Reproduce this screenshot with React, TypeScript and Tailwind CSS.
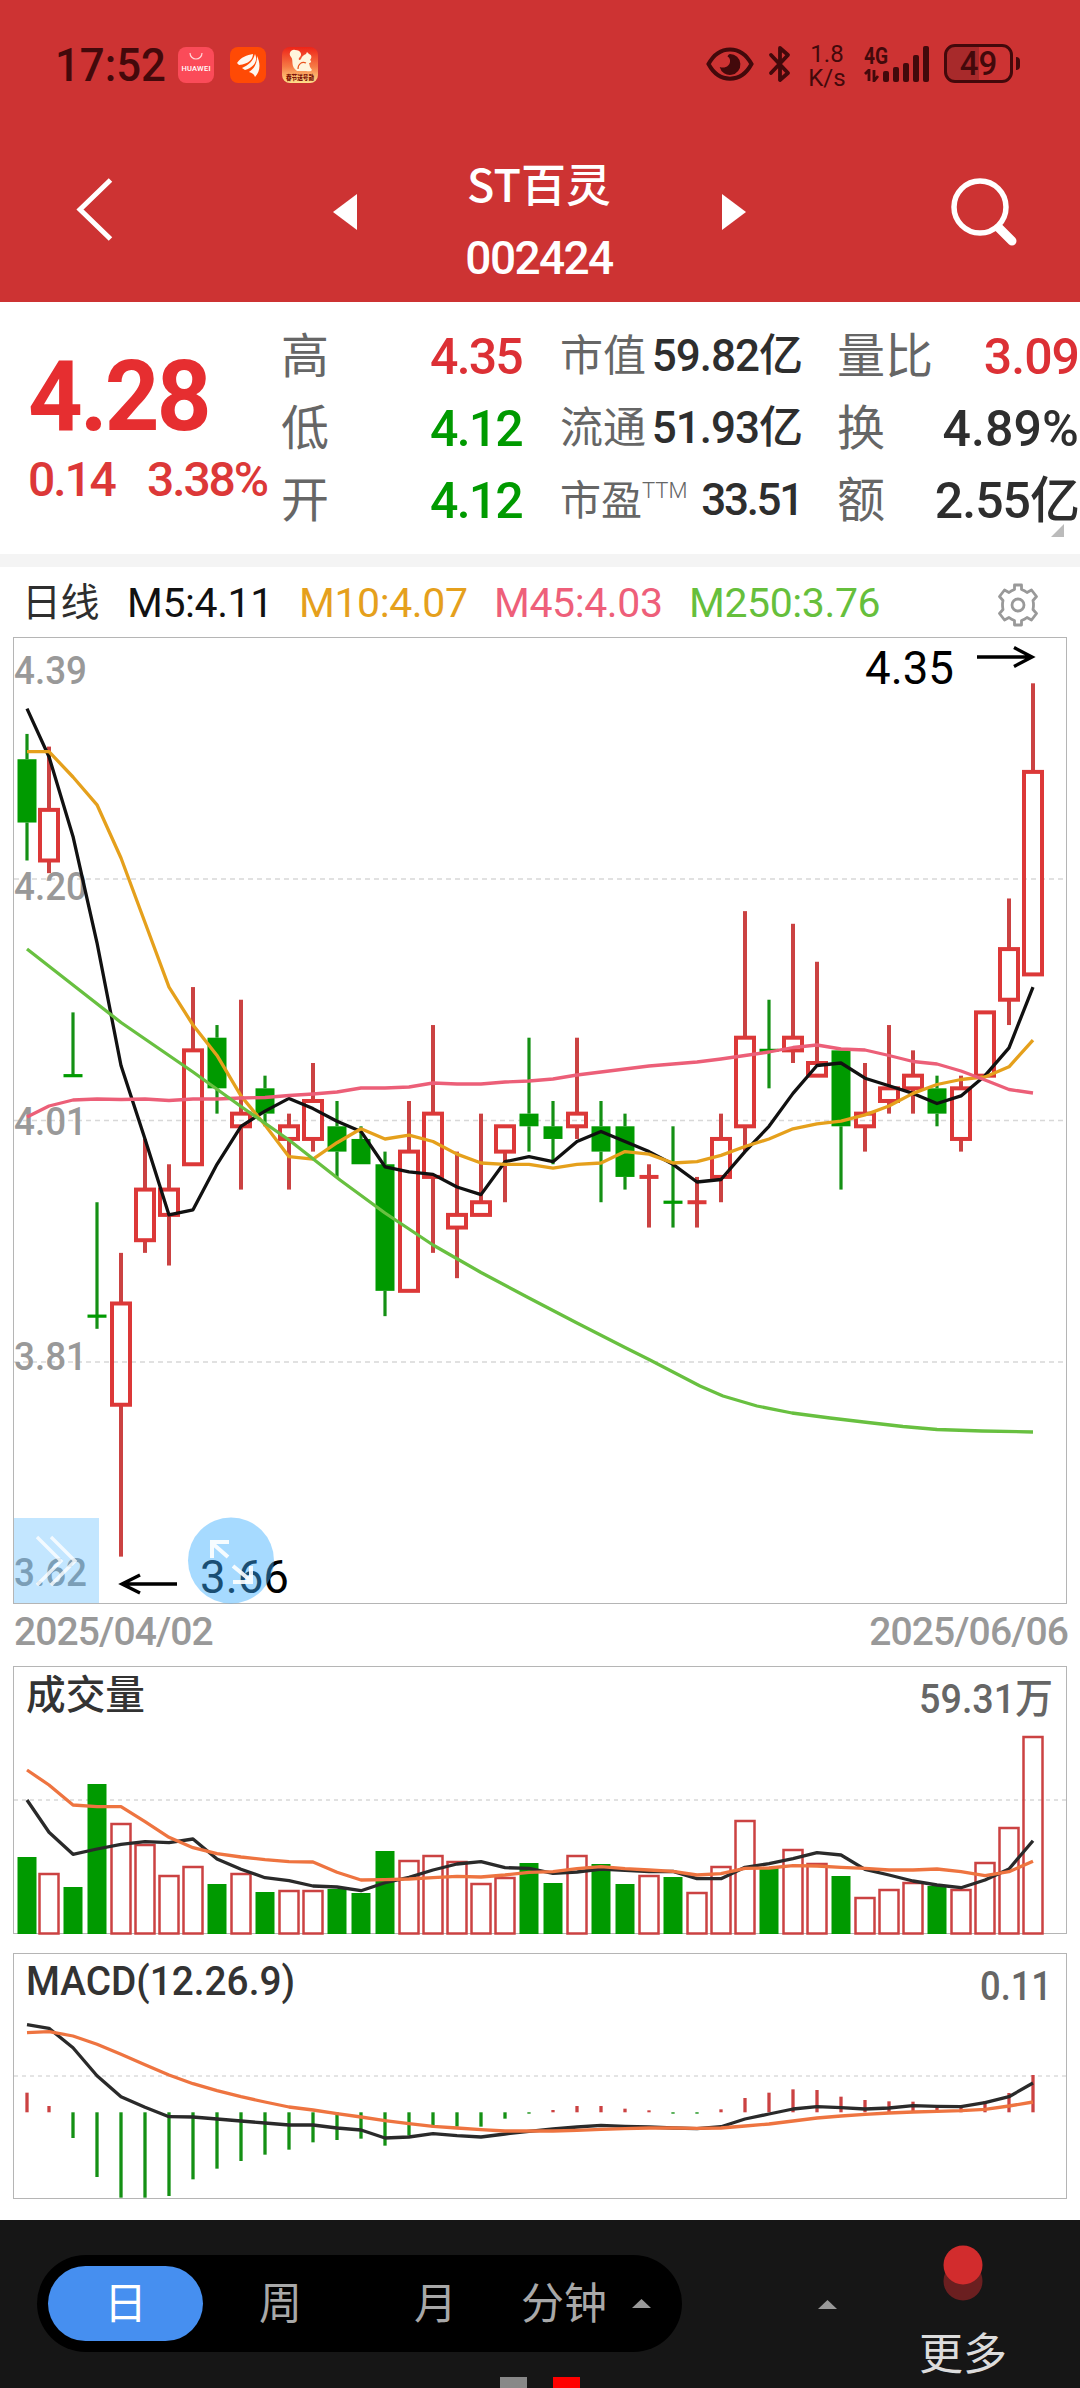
import React from "react";

type Candle = [up: boolean, high: number, top: number, bottom: number, low: number];

// Daily candles in cents, oldest first.
const candles: Candle[] = [
  [false, 431, 429, 424, 421], [true, 430, 425, 421, 420], [false, 409, 404, 404, 404], [false, 394, 385, 385, 384],
  [true, 390, 386, 378, 366], [true, 399, 395, 391, 390], [true, 397, 395, 393, 389], [true, 411, 406, 397, 397],
  [false, 408, 407, 403, 401], [true, 410, 401, 400, 395], [false, 404, 403, 401, 400], [true, 401, 400, 399, 395],
  [true, 405, 402, 399, 398], [false, 402, 400, 398, 396], [false, 400, 399, 397, 397], [false, 398, 397, 387, 385],
  [true, 402, 398, 387, 387], [true, 408, 401, 396, 390], [true, 398, 393, 392, 388], [true, 401, 394, 393, 393],
  [true, 400, 400, 398, 394], [false, 407, 401, 400, 398], [false, 402, 400, 399, 397], [true, 407, 401, 400, 399],
  [false, 402, 400, 398, 394], [false, 401, 400, 396, 395], [true, 397, 396, 396, 392], [false, 400, 394, 394, 392],
  [true, 396, 394, 394, 392], [true, 401, 399, 396, 394], [true, 417, 407, 400, 398], [false, 410, 406, 406, 403],
  [true, 416, 407, 406, 405], [true, 413, 405, 404, 404], [false, 406, 406, 400, 395], [true, 405, 401, 400, 398],
  [true, 408, 403, 402, 401], [true, 406, 404, 403, 401], [false, 404, 403, 401, 400], [true, 404, 403, 399, 398],
  [true, 409, 409, 404, 404], [true, 418, 414, 410, 408], [true, 435, 428, 412, 412],
];

const RED = "#dc3838";
const GREEN = "#009a00";
const DIN = "Roboto, 'Noto Sans CJK SC', sans-serif";

const cx = (i: number) => (i === 0 ? 27 : 25 + 24 * i);
const py = (cents: number) => 683.3 + (435 - cents) * 12.657;
const line = (ys: number[]) => ys.map((y, i) => `${cx(i)},${y.toFixed(1)}`).join(" ");

const closes = candles.map(([up, , top, bottom]) => (up ? top : bottom));
const average = (n: number, head: number[]) =>
  closes.map((_, i) => (i < head.length ? head[i] : closes.slice(i - n + 1, i + 1).reduce((a, b) => a + b, 0) / n));

const ma5 = average(5, [433, 429.2, 422.9, 414.5]).map(py);
const ma10 = average(10, [429.6, 429.6, 427.6, 425.4, 421.2, 416.1, 411, 408, 405.6]).map(py);
const ma45 = [
  1117, 1106, 1100, 1099, 1099.5, 1099, 1100.5, 1099, 1099, 1098, 1097.5, 1095.5, 1094, 1092, 1088, 1088, 1087, 1083,
  1084, 1084, 1082, 1081, 1079, 1075, 1072, 1069, 1066, 1064, 1062, 1059, 1055.5, 1052, 1047.5, 1045, 1049, 1050,
  1055.5, 1061.5, 1064, 1071, 1080, 1089.5, 1093,
];
const ma250 =
  "27,949 73,985 121,1022.5 193,1072 241,1106.5 289,1140 340,1180 385,1213 433,1245 481,1272.5 529,1298 577,1323 625,1347.5 650,1360 675,1373 700,1386 723,1396 757,1406 792,1413 830,1418 868,1422.5 903,1426.5 937,1429.5 982,1431 1033,1432";

const volumeTops = [
  1857, 1874, 1887, 1784, 1824, 1845, 1876, 1867, 1884, 1874, 1892, 1891, 1891, 1889, 1893, 1851, 1861, 1856, 1862,
  1884, 1878, 1863, 1883, 1856, 1864, 1884, 1876, 1877, 1893, 1867, 1821, 1868, 1850, 1864, 1876, 1898, 1890, 1883,
  1886, 1890, 1863, 1828, 1737,
];
const third = (base: number) => (v: number) => base + v / 3;
const volFast = [
  480, 577, 643, 627, 613, 605, 608, 597, 657, 688, 713, 722, 738, 741, 752, 728, 712, 690, 672, 665, 683, 685, 700,
  696, 687, 691, 695, 694, 716, 716, 682, 671, 656, 638, 645, 688, 705, 723, 735, 743, 720, 687, 602,
].map(third(1640));
const volSlow = [
  390, 435, 495, 500, 500, 545, 592, 623, 641, 651, 659, 665, 666, 697, 720, 719, 717, 713, 709, 711, 705, 697, 695,
  686, 680, 686, 690, 694, 705, 701, 685, 684, 677, 678, 682, 685, 690, 690, 687, 695, 707, 695, 664,
].map(third(1640));

const macdBars = [
  458, 498, 594, 711, 773, 773, 768, 718, 686, 663, 644, 629, 607, 600, 596, 617, 587, 562, 560, 560, 536, 521, 510,
  498, 498, 506, 511, 521, 521, 508, 474, 458, 448, 450, 470, 480, 484, 485, 502, 503, 483, 459, 405,
].map(third(1940));
const dif = [
  254, 265, 323, 407, 470, 502, 530, 531, 537, 543, 549, 555, 555, 564, 570, 594, 591, 581, 587, 591, 582, 574, 567,
  561, 556, 559, 561, 564, 566, 560, 537, 522, 507, 500, 503, 507, 504, 497, 499, 500, 488, 470, 429,
].map(third(1940));
const dea = [
  278, 275, 288, 313, 343, 374, 405, 431, 452, 470, 486, 501, 510, 521, 531, 542, 551, 559, 564, 569, 573, 573, 573,
  571, 568, 566, 564, 564, 565, 564, 558, 552, 543, 534, 528, 523, 519, 516, 514, 512, 508, 498, 486,
].map(third(1940));

type LabelProps = { x: number; y: number; w: number; size: number; fill: string; weight?: number; children: string };

function Label({ x, y, w, size, fill, weight = 500, children }: LabelProps) {
  return (
    <text x={x} y={y} textLength={w} lengthAdjust="spacingAndGlyphs" fontSize={size} fill={fill} fontWeight={weight} fontFamily={DIN}>
      {children}
    </text>
  );
}

function StatusBar() {
  return (
    <div className="flex h-[130px] items-start pl-[55px] pr-[60px] pt-[44px] text-[#43090b]">
      <span className="w-[123px] origin-left scale-x-[0.95] whitespace-nowrap text-[46px] font-medium leading-[43px]">17:52</span>
      <div className="mt-[3px] flex gap-4">
        <svg width="36" height="36" viewBox="0 0 36 36">
          <rect width="36" height="36" rx="8" fill="#fb4b59" />
          <path d="M12 6a6 6 0 0 0 12 0" fill="none" stroke="#ffd5d8" strokeWidth="1.2" />
          <text x="3.5" y="23.5" fontSize="7.5" fontWeight="500" fill="#fff" textLength="29" fontFamily={DIN}>HUAWEI</text>
        </svg>
        <svg width="36" height="36" viewBox="0 0 36 36">
          <rect width="36" height="36" rx="8" fill="#ff4a05" />
          <path d="M7 16C11 10 17 8 23 7c0 5-4 10-14 11zM12 21C19 18 23 14 25 7c3 6 0 13-10 16zM19 25c6-4 8-9 8-16 4 8 3 16-2 21-1-3-3-4-6-5z" fill="#fff6ee" />
        </svg>
        <svg width="36" height="36" viewBox="0 0 36 36">
          <defs>
            <linearGradient id="promo" x1="0" y1="0" x2="0" y2="1">
              <stop offset="0" stopColor="#ee2418" />
              <stop offset="0.55" stopColor="#f67a45" />
              <stop offset="1" stopColor="#ffe08a" />
            </linearGradient>
          </defs>
          <rect width="36" height="36" rx="8" fill="url(#promo)" />
          <path d="M15 24C8 19 12 13 9 10 6 7 9 2 13 3c6 0 8 5 4 8-1 2 1 3 2 1 1-3 3-4 5-5l1-2 2 2c3 1 3 4 1 6 2 1 1 3-1 3l1 4 2 3c-1 2-4 1-6 1z" fill="#fff5dd" />
          <path d="M16 22c0-5 4-8 8-6" fill="none" stroke="#e8541e" strokeWidth="1.2" />
          <text x="4" y="32.5" fontSize="6.5" fontWeight="900" fill="#7d1508" textLength="28" lengthAdjust="spacingAndGlyphs" fontFamily={DIN}>春节送号勋</text>
        </svg>
      </div>
      <div className="ml-auto flex items-start">
        <svg width="48" height="34" viewBox="0 0 48 34" className="mt-[3px]">
          <path d="M2.5 17C13-2.5 35-2.5 45.500 17 35 36.500 13 36.500 2.500 17z" fill="none" stroke="currentColor" strokeWidth="4" />
          <path d="M24 7a10.500 10.500 0 1 1-10.300 13c5 2 11-1 10.300-7-.2-2-1.500-3-2.500-3.500C22 8 23 7.200 24 7z" fill="currentColor" />
        </svg>
        <svg width="26" height="38" viewBox="0 0 26 38" className="ml-[13px] mt-[1px]">
          <path d="M4 10l17 18-8 7V3l8 7L4 28" fill="none" stroke="currentColor" strokeWidth="3.8" strokeLinejoin="round" strokeLinecap="round" />
        </svg>
        <div className="ml-[14px] mt-[-2px] w-[40px] text-center text-[24px] leading-[24px]">
          <div>1.8</div>
          <div>K/s</div>
        </div>
        <div className="ml-[17px] w-[27px]">
          <div className="origin-left scale-x-[0.8] text-[24px] font-bold leading-[24px]">4G</div>
          <svg width="16" height="13" viewBox="0 0 16 13" className="mt-px">
            <path d="M1 5l4-4v11M10 1v11l4-5" fill="none" stroke="currentColor" strokeWidth="2.8" />
          </svg>
        </div>
        <svg width="48" height="38" viewBox="0 0 48 38" className="-ml-[9px] mt-[1px]">
          {[11, 15, 19, 27, 36].map((h, i) => (
            <rect key={h} x={1 + i * 10} y={37 - h} width="6" height={h} rx="2" fill="currentColor" />
          ))}
        </svg>
        <div className="ml-[14px] flex items-center">
          <div className="h-[39px] w-[69px] rounded-[11px] border-[3px] border-[#43090b] bg-linear-to-r from-[#a82a2b] from-50% to-[#cd3333] to-50% text-center text-[33px] font-medium leading-[34px]">49</div>
          <div className="ml-[3px] h-[13px] w-[4px] rounded-r bg-[#43090b]" />
        </div>
      </div>
    </div>
  );
}

function TitleBar() {
  return (
    <div className="flex h-[172px] items-start text-white">
      <svg width="40" height="70" viewBox="0 0 40 70" className="ml-[75px] mt-[44px]">
        <path d="M35.5 6L5 35.500 35.500 65" fill="none" stroke="#fff" strokeWidth="5" />
      </svg>
      <svg width="24" height="36" viewBox="0 0 24 36" className="ml-[218px] mt-[64px]">
        <path d="M24 0v36L0 18z" fill="#fff" />
      </svg>
      <div className="ml-[82px] w-[200px] text-center">
        <div className="mt-[23px] h-[60px] text-[45px] font-medium leading-[60px] [font-family:'Noto_Sans_CJK_SC',sans-serif]">ST百灵</div>
        <div className="mt-[17px] text-[46px] font-medium leading-[56px] tracking-[-1.6px]">002424</div>
      </div>
      <svg width="24" height="36" viewBox="0 0 24 36" className="ml-[83px] mt-[64px]">
        <path d="M0 0v36l24-18z" fill="#fff" />
      </svg>
      <svg width="70" height="74" viewBox="0 0 70 74" className="ml-[202px] mt-[46px]">
        <circle cx="32" cy="31" r="26" fill="none" stroke="#fff" strokeWidth="5.5" />
        <path d="M51 52L64 65" stroke="#fff" strokeWidth="9" strokeLinecap="round" />
      </svg>
    </div>
  );
}

type StatProps = { label: React.ReactNode; value: string; tone: string };

function WideStat({ label, value, tone }: StatProps) {
  return (
    <div className="flex h-[72px] items-center justify-between">
      <span className="text-[48px] text-[#666]">{label}</span>
      <span className={`text-[50px] font-medium ${tone}`}>{value}</span>
    </div>
  );
}

function SmallStat({ label, value, tone }: StatProps) {
  return (
    <div className="flex h-[72px] items-center justify-between">
      <span className="text-[43px] text-[#666]">{label}</span>
      <span className={`text-[44px] font-medium ${tone}`}>{value}</span>
    </div>
  );
}

function Quote() {
  return (
    <section className="relative flex h-[252px] items-start leading-none">
      <div className="w-[256px] shrink-0 pl-[28px] pt-[44px] text-[#e62e30]">
        <div className="origin-left scale-x-[0.965] text-[99px] font-bold leading-[100px] tracking-[-3px]">4.28</div>
        <div className="mt-[6px] flex w-[239px] justify-between whitespace-nowrap text-[48px] font-medium leading-[56px] tracking-[-2.1px] text-[#dc3838]">
          <span>0.14</span>
          <span>3.38%</span>
        </div>
      </div>
      <div className="ml-[25px] mt-[19px] w-[241px]">
        <WideStat label="高" value="4.35" tone="text-[#dc3035] tracking-[-1.8px]" />
        <WideStat label="低" value="4.12" tone="text-[#009a00] tracking-[-1.8px]" />
        <WideStat label="开" value="4.12" tone="text-[#009a00] tracking-[-1.8px]" />
      </div>
      <div className="ml-[38px] mt-[18px] w-[242px] whitespace-nowrap">
        <SmallStat label="市值" value="59.82亿" tone="text-[#2e2e2e] tracking-[-1px]" />
        <SmallStat label="流通" value="51.93亿" tone="text-[#2e2e2e] tracking-[-1px]" />
        <SmallStat
          label={<span className="text-[41px]">市盈<sup className="top-[-0.75em] text-[22px] font-light">TTM</sup></span>}
          value="33.51"
          tone="text-[#2e2e2e] tracking-[-2.3px]"
        />
      </div>
      <div className="ml-[35px] mt-[19px] w-[242px] whitespace-nowrap">
        <WideStat label="量比" value="3.09" tone="text-[#dc3035] tracking-[-1px]" />
        <WideStat label="换" value="4.89%" tone="text-[#2e2e2e] tracking-[0.1px]" />
        <WideStat label="额" value="2.55亿" tone="text-[#2e2e2e] tracking-[-1px]" />
      </div>
      <svg width="13" height="13" viewBox="0 0 13 13" className="absolute left-[1051px] top-[222px]">
        <path d="M13 0v13H0z" fill="#bbb" />
      </svg>
    </section>
  );
}

function Legend() {
  return (
    <div className="flex h-[69px] items-center whitespace-nowrap pt-[3px] text-[41px] leading-none tracking-[-0.4px]">
      <span className="ml-[22px] w-[105px] text-[39px] text-[#2e2e2e]">日线</span>
      <span className="w-[172px] text-[#111]">M5:4.11</span>
      <span className="w-[195px] text-[#e5a01c]">M10:4.07</span>
      <span className="w-[195px] text-[#ee5f7a]">M45:4.03</span>
      <span className="text-[#66bf3c]">M250:3.76</span>
      <svg width="44" height="44" viewBox="0 0 44 44" className="ml-auto mr-[40px] mt-[3px]">
        <path
          d="M18.5 2h7v4.500q3 1 5.500 3l4.500-2.500 5 6.500-3.500 4q1 4.500 0 9l3.500 4-5 6.500-4.500-2.500q-2.500 2-5.500 3V42h-7v-4.500q-3-1-5.500-3L8.500 37l-5-6.500 3.500-4q-1-4.500 0-9l-3.500-4L8.500 7l4.500 2.500q2.500-2 5.500-3z"
          fill="none"
          stroke="#999"
          strokeWidth="2.8"
          strokeLinejoin="round"
        />
        <circle cx="22" cy="22" r="6" fill="none" stroke="#999" strokeWidth="2.8" />
      </svg>
    </div>
  );
}

function PriceChart() {
  return (
    <svg width="1080" height="970" viewBox="0 636 1080 970" className="block">
      <rect x="13.5" y="637.5" width="1053" height="966" fill="none" stroke="#b5b5b5" />
      {[879, 1120.5, 1362].map((y) => (
        <line key={y} x1="14" x2="1066" y1={y} y2={y} stroke="#d8d8d8" strokeWidth="1.5" strokeDasharray="5 4" />
      ))}
      {(
        [
          ["4.39", 683.5], ["4.20", 900], ["4.01", 1134.5], ["3.81", 1370], ["3.62", 1585.5],
        ] as const
      ).map(([t, y]) => (
        <Label key={t} x={14} y={y} w={73} size={39} fill="#999">{t}</Label>
      ))}
      {candles.map(([up, high, top, bottom, low], i) => {
        const x = cx(i);
        const color = up ? RED : GREEN;
        const wick = up ? "#cb4242" : "#149014";
        return (
          <g key={i} stroke={wick} strokeWidth={up ? 4 : 3.2}>
            {high > top && <line x1={x} x2={x} y1={py(high)} y2={py(top)} />}
            {low < bottom && <line x1={x} x2={x} y1={py(bottom)} y2={py(low)} />}
            {top === bottom ? (
              <line x1={x - 9.5} x2={x + 9.5} y1={py(top)} y2={py(top)} stroke={color} />
            ) : up ? (
              <rect x={x - 9} y={py(top)} width="18" height={py(bottom) - py(top)} fill="none" stroke={color} />
            ) : (
              <rect x={x - 9.5} y={py(top)} width="19" height={py(bottom) - py(top)} fill={GREEN} stroke="none" />
            )}
          </g>
        );
      })}
      <g fill="none" strokeWidth="3.3" strokeLinejoin="round">
        <polyline points={line(ma5)} stroke="#111" />
        <polyline points={line(ma10)} stroke="#e5a01c" />
        <polyline points={line(ma45)} stroke="#ec5f78" />
        <polyline points={ma250} stroke="#68c040" />
      </g>
      <g fill="none" stroke="#000" strokeWidth="3.4">
        <path d="M977 657h55M1014 647.500l18 9.500-18 9.500" />
        <path d="M177 1584h-55M140 1575l-18 9 18 9" />
      </g>
      <Label x={865} y={684} w={89} size={46} fill="#000" weight={400}>4.35</Label>
      <Label x={200} y={1593} w={89} size={46} fill="#000" weight={400}>3.66</Label>
      <rect x="14" y="1518" width="85" height="85" fill="#39adff" fillOpacity="0.3" />
      <path d="M37 1537l24 24-24 24M51 1537l24 24-24 24" fill="none" stroke="#fff" strokeOpacity="0.8" strokeWidth="3.4" />
      <circle cx="231" cy="1560.5" r="43" fill="#39adff" fillOpacity="0.45" />
      <path d="M228 1557l-16-14M229 1542h-17v16M233 1566l17 14M233 1582h18v-16" fill="none" stroke="#fff" strokeOpacity="0.9" strokeWidth="4" />
    </svg>
  );
}

function VolumeChart() {
  return (
    <svg width="1080" height="270" viewBox="0 1666 1080 270" className="block">
      <rect x="13.5" y="1666.5" width="1053" height="267" fill="none" stroke="#b5b5b5" />
      <line x1="14" x2="1066" y1="1800" y2="1800" stroke="#d8d8d8" strokeWidth="1.5" strokeDasharray="4 4" />
      {volumeTops.map((y, i) =>
        candles[i][0] ? (
          <rect key={i} x={cx(i) - 9.5} y={y} width="19" height={1933.5 - y} fill="none" stroke="#cb4242" strokeWidth="2.5" />
        ) : (
          <rect key={i} x={cx(i) - 9.5} y={y} width="19" height={1934 - y} fill={GREEN} />
        ),
      )}
      <g fill="none" strokeWidth="3.3" strokeLinejoin="round">
        <polyline points={line(volFast)} stroke="#2a2a2a" />
        <polyline points={line(volSlow)} stroke="#ee7440" />
      </g>
      <Label x={26} y={1709} w={119} size={39.5} fill="#333" weight={500}>成交量</Label>
      <Label x={919} y={1713} w={134} size={41} fill="#666">59.31万</Label>
    </svg>
  );
}

function MacdChart() {
  return (
    <svg width="1080" height="248" viewBox="0 1953 1080 248" className="block">
      <rect x="13.5" y="1953.5" width="1053" height="245" fill="none" stroke="#b5b5b5" />
      <line x1="14" x2="1066" y1="2076" y2="2076" stroke="#dcdcdc" strokeWidth="1.5" strokeDasharray="4 4" />
      {macdBars.map((y, i) => (
        <line key={i} x1={cx(i)} x2={cx(i)} y1="2112.3" y2={y} stroke={y < 2112.3 ? "#cb4242" : "#149014"} strokeWidth="3.3" />
      ))}
      <g fill="none" strokeWidth="3.3" strokeLinejoin="round">
        <polyline points={line(dif)} stroke="#2a2a2a" />
        <polyline points={line(dea)} stroke="#ee7440" />
      </g>
      <Label x={26} y={1995} w={269} size={41} fill="#333" weight={500}>MACD(12.26.9)</Label>
      <Label x={980} y={2000} w={72} size={41} fill="#666">0.11</Label>
    </svg>
  );
}

function Caret({ className }: { className: string }) {
  return (
    <svg width="19" height="9" viewBox="0 0 19 9" className={className}>
      <path d="M0 9L9.5 0 19 9z" fill="#999" />
    </svg>
  );
}

function BottomBar() {
  return (
    <footer className="relative flex h-[168px] items-start bg-[#161616] text-[43px] leading-none text-[#a8a8a8]">
      <div className="ml-[37px] mt-[35px] flex h-[97px] w-[645px] items-center rounded-full bg-black pl-[11px]">
        <div className="flex h-[75px] w-[155px] items-center justify-center rounded-full bg-[#468ff0] pt-[2px] text-white">日</div>
        <div className="w-[155px] pt-[2px] text-center">周</div>
        <div className="w-[155px] pt-[2px] text-center">月</div>
        <div className="ml-[8px] pt-[2px]">分钟</div>
        <Caret className="ml-[25px]" />
      </div>
      <Caret className="ml-[136px] mt-[80px]" />
      <div className="ml-[62px] mt-[24px] flex w-[128px] flex-col items-center">
        <svg width="40" height="60" viewBox="0 0 40 60">
          <circle cx="20" cy="37" r="19.5" fill="#6b1f20" />
          <circle cx="20" cy="21" r="19.5" fill="#d22c2d" />
        </svg>
        <div className="mt-[29px] text-[44px] text-[#dcdcdc]">更多</div>
      </div>
      <div className="absolute bottom-0 left-[500px] flex gap-[26px]">
        <div className="h-[11px] w-[27px] bg-[#888]" />
        <div className="h-[11px] w-[27px] bg-[#f00]" />
      </div>
    </footer>
  );
}

export default function App() {
  return (
    <div className="flex h-[2388px] w-[1080px] flex-col overflow-hidden bg-white [font-family:Roboto,'Noto_Sans_CJK_SC',sans-serif]">
      <header className="h-[302px] bg-[#cd3333]">
        <StatusBar />
        <TitleBar />
      </header>
      <Quote />
      <div className="h-[13px] bg-[#f4f4f4]" />
      <Legend />
      <PriceChart />
      <div className="flex h-[60px] justify-between pl-[14px] pr-[12px] pt-[3px] text-[39px] font-medium leading-[46px] tracking-[-0.9px] text-[#999]">
        <span>2025/04/02</span>
        <span>2025/06/06</span>
      </div>
      <VolumeChart />
      <div className="h-[17px]" />
      <MacdChart />
      <div className="h-[19px]" />
      <BottomBar />
    </div>
  );
}
